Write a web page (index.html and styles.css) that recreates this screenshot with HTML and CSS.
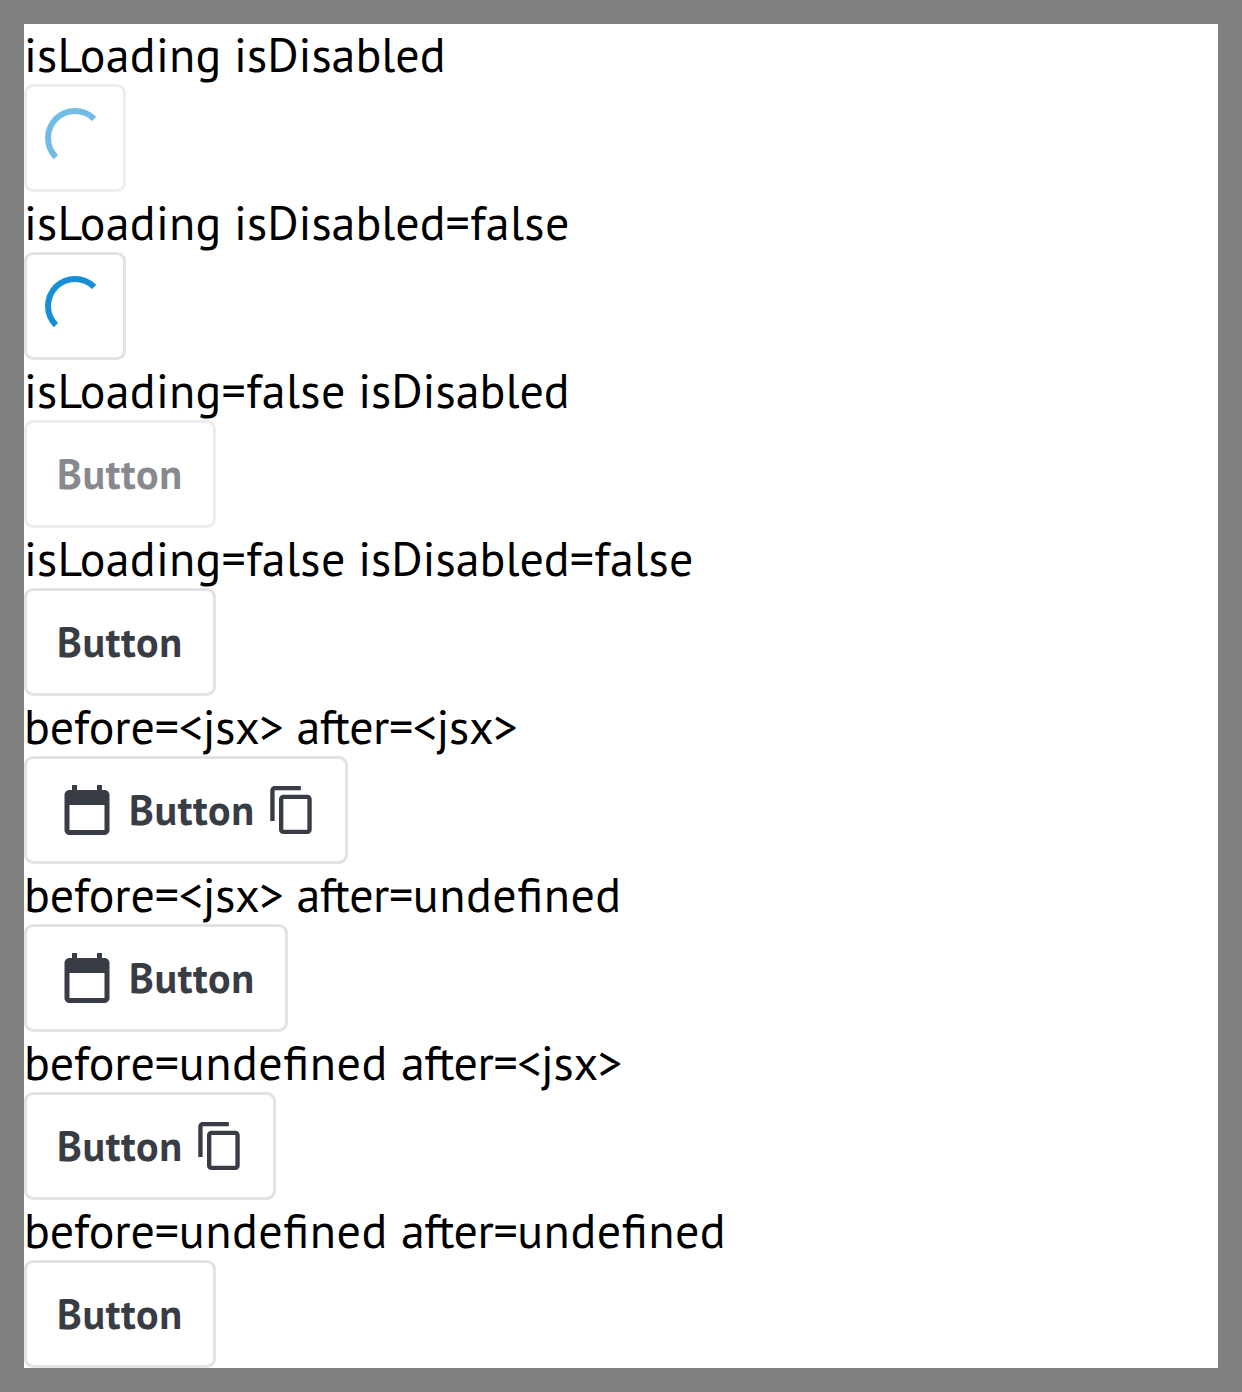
FILE: index.html
```html
<!DOCTYPE html>
<html lang="en">
<head>
<meta charset="utf-8">
<title>Button states</title>
<link rel="stylesheet" href="styles.css">
</head>
<body>
<svg class="sprite" aria-hidden="true">
  <symbol id="calendar" viewBox="0 0 24 24"><path d="M16 2v2H8V2H6v2H5c-1.1 0-2 .9-2 2v14c0 1.1.9 2 2 2h14c1.1 0 2-.9 2-2V6c0-1.1-.9-2-2-2h-1V2h-2zm3 18H5V10h14v10z"/></symbol>
  <symbol id="copy" viewBox="0.5 1 22 22"><path d="M16 1H4c-1.1 0-2 .9-2 2v14h2V3h12V1zm3 4H8c-1.1 0-2 .9-2 2v14c0 1.1.9 2 2 2h11c1.1 0 2-.9 2-2V7c0-1.1-.9-2-2-2zm0 16H8V7h11v14z"/></symbol>
</svg>
<main class="panel">
  <div class="label"><span class="loading">isLoading</span> isDisabled</div>
  <button class="button button--loading" disabled aria-label="Loading"><span class="spinner"></span></button>
  <div class="label"><span class="loading">isLoading</span> isDisabled<span class="false">=false</span></div>
  <button class="button button--loading" aria-label="Loading"><span class="spinner"></span></button>
  <div class="label"><span class="loading">isLoading</span><span class="false">=false</span> isDisabled</div>
  <button class="button" disabled><span class="text">Button</span></button>
  <div class="label"><span class="loading">isLoading</span><span class="false">=false</span> isDisabled<span class="false">=false</span></div>
  <button class="button"><span class="text">Button</span></button>
  <div class="label label--slots"><span class="name-before">before=</span><span class="jsx">&lt;jsx&gt;</span> <span class="name-after">after=</span><span class="jsx">&lt;jsx&gt;</span></div>
  <button class="button"><svg class="before"><use href="#calendar"/></svg><span class="text">Button</span><svg class="after"><use href="#copy"/></svg></button>
  <div class="label label--slots"><span class="name-before">before=</span><span class="jsx">&lt;jsx&gt;</span> <span class="name-after">after=</span><span class="undefined">undefined</span></div>
  <button class="button"><svg class="before"><use href="#calendar"/></svg><span class="text">Button</span></button>
  <div class="label label--slots"><span class="name-before">before=</span><span class="undefined">undefined</span> <span class="name-after">after=</span><span class="jsx">&lt;jsx&gt;</span></div>
  <button class="button"><span class="text">Button</span><svg class="after"><use href="#copy"/></svg></button>
  <div class="label label--slots"><span class="name-before">before=</span><span class="undefined">undefined</span> <span class="name-after">after=</span><span class="undefined">undefined</span></div>
  <button class="button"><span class="text">Button</span></button>
</main>
</body>
</html>
```
FILE: styles.css
```css
* { box-sizing: border-box; }
body {
  margin: 0;
  padding: 24px;
  background: #808080;
  font-family: "PT Sans", "Noto Sans", sans-serif;
}
.sprite { display: none; }
.panel {
  display: flex;
  flex-direction: column;
  align-items: flex-start;
  height: 1344px;
  background: #fff;
}
.label {
  height: 60px;
  font-size: 48px;
  line-height: 60px;
  white-space: nowrap;
  word-spacing: -.3px;
  font-feature-settings: "liga" 1, "kern" 1;
  color: #000;
}
.label--slots { word-spacing: .3px; }
.loading { letter-spacing: .25px; }
.false { letter-spacing: .35px; }
.name-before { letter-spacing: -.14px; }
.name-after { letter-spacing: -.45px; }
.jsx { letter-spacing: -.35px; }
.undefined { letter-spacing: .53px; }
.button {
  display: flex;
  align-items: center;
  height: 108px;
  margin: 0;
  padding: 0 30px;
  border: 3px solid #e2e2e2;
  border-radius: 9px;
  background: #fff;
  color: #383c45;
  font: bold 42px/60px "PT Sans", "Noto Sans", sans-serif;
}
.button:disabled { opacity: .6; }
.button--loading { padding: 0 18px; }
.text { width: 126px; text-align: left; white-space: nowrap; letter-spacing: .7px; }
.before, .after { fill: currentColor; flex: none; }
.before { width: 60px; height: 60px; margin-right: 12px; }
.after { width: 48px; height: 48px; margin-left: 12px; }
.spinner {
  width: 60px;
  height: 60px;
  border: 6px solid transparent;
  border-top-color: #168fd4;
  border-left-color: #168fd4;
  border-radius: 50%;
}
```
